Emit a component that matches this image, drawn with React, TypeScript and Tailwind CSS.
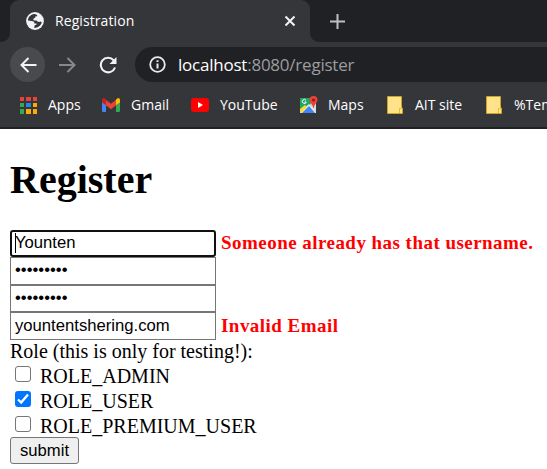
import React from "react";

const UI = "font-['Open_Sans','Noto_Sans',sans-serif]";
const SERIF = "font-['Liberation_Serif',serif]";
const SANS = "font-['Liberation_Sans',sans-serif]";

function Globe() {
  return (
    <svg width="18" height="18" viewBox="0 0 18 18" className="shrink-0">
      <circle cx="9" cy="9" r="8.9" fill="#f1f3f4" />
      <path d="M8.2 2 C4.5 2.5 2 5.2 2 8.5 L5.5 9 C7.8 9.2 8.6 10 8.3 11.5 L10.5 11.6 C11 12.5 10 13.2 8.5 13.5 L8.3 15.9 C11.8 16 15 13.5 15.8 10.5 L14.5 9.6 C13.2 10.3 11 9.8 10.5 8.6 L8 8.4 C6.8 7.8 7.2 6.2 9 6 L9.3 4.5 L11.3 4.2 C11.7 3.2 10 2.2 8.2 2Z" fill="#35363a" />
      <path d="M2 9.5 C2.4 12.6 4.4 14.8 7 15.6 L6.8 13.3 C5.3 12.5 5.4 10.6 4 10.1Z" fill="#f1f3f4" />
    </svg>
  );
}

function AppsIcon() {
  const colors = ["#ea4335", "#ea4335", "#ea4335", "#34a853", "#1a88f0", "#fbab05", "#34a853", "#fbab05", "#fbab05"];
  return (
    <div className="grid grid-cols-3 gap-[2px] w-[17px] h-[17px]">
      {colors.map((c, i) => (
        <span key={i} style={{ background: c }} />
      ))}
    </div>
  );
}

function GmailIcon() {
  return (
    <svg width="18" height="14" viewBox="0 0 18 14">
      <path d="M0 3h4v11H1.2Q0 14 0 12.8Z" fill="#4285f4" />
      <path d="M14 3h4v9.8q0 1.2-1.2 1.2H14Z" fill="#34a853" />
      <path d="M3.500 1.500L9 5.800l5.500-4.300V7L9 11.200 3.500 7Z" fill="#ea4335" />
      <path d="M0 4.500V2Q0 0 1.800 0 2.600 0 4 1.600V7Z" fill="#c5221f" />
      <path d="M18 4.500V2Q18 0 16.200 0 15.400 0 14 1.600V7Z" fill="#fbbc04" />
    </svg>
  );
}

function YouTubeIcon() {
  return (
    <svg width="18" height="14" viewBox="0 0 18 14">
      <rect width="18" height="14" rx="3" fill="#f00" />
      <path d="M7 4l5 3-5 3Z" fill="#fff" />
    </svg>
  );
}

function MapsIcon() {
  return (
    <svg width="18" height="18" viewBox="0 0 18 18">
      <path d="M0 2h16v15H0Z" fill="#23a566" />
      <path d="M0 16L9 8l7 6v3H0Z" fill="#e8eaed" />
      <path d="M2 17l7-7 6 7Z" fill="#4285f4" />
      <path d="M0 13l5-4 2 2-6 6H0Z" fill="#fdd835" />
      <path d="M10 8l6-3v12Z" fill="#d8dcdf" />
      <path d="M6 4.300A2 2 0 1 0 6.300 6H4.500" fill="none" stroke="#fff" strokeWidth="1" />
      <path d="M13.500 0a4 4 0 0 1 4 4c0 2.800-3.200 4-3.700 8h-.6C12.700 8 9.500 6.800 9.500 4a4 4 0 0 1 4-4Z" fill="#ea4335" />
      <circle cx="13.500" cy="4" r="1.500" fill="#8c1d18" />
    </svg>
  );
}

function FolderIcon() {
  return (
    <svg width="16" height="18" viewBox="0 0 16 18">
      <path d="M.5.500h14v11.500h1v5.500H.5Z" fill="#ffe28a" stroke="#c9a32b" />
      <path d="M12.500 17v-4.500h2v-2" fill="none" stroke="#e5c020" />
    </svg>
  );
}

function Bookmark({ icon, box, label }: { icon: React.ReactNode; box: string; label: string }) {
  return (
    <div className={`flex shrink-0 items-center ${box}`}>
      <span className="flex w-[28px] shrink-0 items-center">{icon}</span>
      <span className="whitespace-nowrap leading-5">{label}</span>
    </div>
  );
}

function Browser() {
  return (
    <div className={`h-[129px] bg-[#35363a] text-white ${UI}`}>
      <div className="flex h-[42px] bg-[#35363a]">
        <div className="w-[10px] bg-[#202124] rounded-br-[9px]" />
        <div className="w-[300px] bg-[#202124]">
          <div className="flex h-[42px] items-center rounded-t-[9px] bg-[#35363a] pl-4 pr-[14px]">
            <Globe />
            <span className="ml-[11px] text-[14px] leading-5 tracking-[0.08px]">Registration</span>
            <svg width="12" height="12" viewBox="0 0 12 12" className="ml-auto" stroke="#f1f3f4" strokeWidth="2">
              <path d="M1.500 1.500l9 9M10.500 1.500l-9 9" />
            </svg>
          </div>
        </div>
        <div className="flex flex-1 items-center rounded-bl-[9px] bg-[#202124] pl-[20px]">
          <svg width="15" height="15" viewBox="0 0 15 15" stroke="#bdc1c6" strokeWidth="2">
            <path d="M7.500 0v15M0 7.500h15" />
          </svg>
        </div>
      </div>
      <div className="flex h-[45px] items-center pl-[10px]">
        <div className="flex h-[35px] w-[35px] items-center justify-center rounded-full bg-[#484a4e] pl-px">
          <svg width="17" height="16" viewBox="0 0 17 16" fill="none" stroke="#f1f3f4" strokeWidth="2">
            <path d="M16.500 8H2M8.500 1l-7 7 7 7" />
          </svg>
        </div>
        <svg width="17" height="16" viewBox="0 0 17 16" fill="none" stroke="#86888b" strokeWidth="2" className="ml-[14px]">
          <path d="M0 8h15M8.500 1l7 7-7 7" />
        </svg>
        <svg width="19" height="18" viewBox="0 0 19 18" fill="none" stroke="#f1f3f4" strokeWidth="2.100" className="ml-[23px]">
          <path d="M16 11.500A7.300 7.300 0 1 1 14.600 4.200" />
          <path d="M17.500 1v7h-7Z" fill="#f1f3f4" stroke="none" />
        </svg>
        <div className="ml-[17px] flex h-[35px] flex-1 items-center rounded-l-full bg-[#202124] pl-[14px]">
          <svg width="17" height="17" viewBox="0 0 17 17" fill="none" stroke="#e8eaed" strokeWidth="1.800">
            <circle cx="8.500" cy="8.500" r="7.300" />
            <path d="M8.500 7.500v5M8.500 4.300v1.800" strokeWidth="2" />
          </svg>
          <span className="ml-[12px] whitespace-nowrap text-[17px] leading-6 tracking-[-0.23px] text-[#9a9da1]">
            <span className="text-white">localhost</span>:8080/register
          </span>
        </div>
      </div>
      <div className="flex h-[40px] items-center overflow-hidden pb-[4px] pl-[20px] text-[14px]">
        <Bookmark icon={<AppsIcon />} box="w-[82px]" label="Apps" />
        <Bookmark icon={<GmailIcon />} box="w-[89px] [&>span:last-child]:ml-px" label="Gmail" />
        <Bookmark icon={<YouTubeIcon />} box="w-[109px] [&>span:last-child]:ml-px" label="YouTube" />
        <Bookmark icon={<MapsIcon />} box="w-[87px]" label="Maps" />
        <Bookmark icon={<FolderIcon />} box="w-[99px]" label="AIT site" />
        <Bookmark icon={<FolderIcon />} box="w-[99px]" label="%Temp%" />
      </div>
      <div className="h-[2px] bg-[#202124]" />
    </div>
  );
}

const field = `flex w-[206px] shrink-0 items-center border border-[#767676] pl-1 text-[16.67px] leading-5 ${SANS}`;
const error = "ml-[5px] mb-[2px] whitespace-nowrap text-[19px] tracking-[0.46px] text-[#ff0000]";

function Role({ label, checked }: { label: string; checked?: boolean }) {
  return (
    <div className="flex h-[25px] items-center pl-[5px]">
      <span className={`mb-[3px] flex h-4 w-4 items-center justify-center rounded-[3px] ${checked ? "bg-[#0075ff]" : "border border-[#767676]"}`}>
        {checked && (
          <svg width="12" height="12" viewBox="0 0 12 12" fill="none" stroke="#fff" strokeWidth="2.300">
            <path d="M1 6.500l3.200 3L11 1.500" />
          </svg>
        )}
      </span>
      <span className="ml-[9px] mt-px">{label}</span>
    </div>
  );
}

export default function App() {
  return (
    <div className="h-[469px] w-[547px] overflow-hidden bg-white">
      <Browser />
      <main className={`pl-[10px] pt-[28px] text-[20px] leading-[23px] text-black ${SERIF}`}>
        <h1 className="h-[73px] text-[40px] font-bold leading-[46px]">Register</h1>
        <div className="flex h-[27px] items-center">
          <div className={`flex h-[27px] w-[206px] shrink-0 items-center rounded-[3px] border-2 border-[#101010] pb-px pl-[3px] text-[16.67px] leading-5 ${SANS}`}>
            <span className="h-[20px] w-px bg-black" />
            <span className="-ml-px">Younten</span>
          </div>
          <b className={error}>Someone already has that username.</b>
        </div>
        <div className={`${field} h-[28px] pb-[2px]`}>•••••••••</div>
        <div className={`${field} h-[27px] pb-px`}>•••••••••</div>
        <div className="flex h-[28px] items-center">
          <div className={`${field} h-[28px]`}>yountentshering.com</div>
          <b className={error}>Invalid Email</b>
        </div>
        <div className="h-[23px]">Role (this is only for testing!):</div>
        <Role label="ROLE_ADMIN" />
        <Role label="ROLE_USER" checked />
        <Role label="ROLE_PREMIUM_USER" />
        <button className={`-mt-px block h-[27px] w-[69px] rounded-[3px] border border-[#767676] bg-[#efefef] text-[16.67px] leading-5 ${SANS}`}>submit</button>
      </main>
    </div>
  );
}
